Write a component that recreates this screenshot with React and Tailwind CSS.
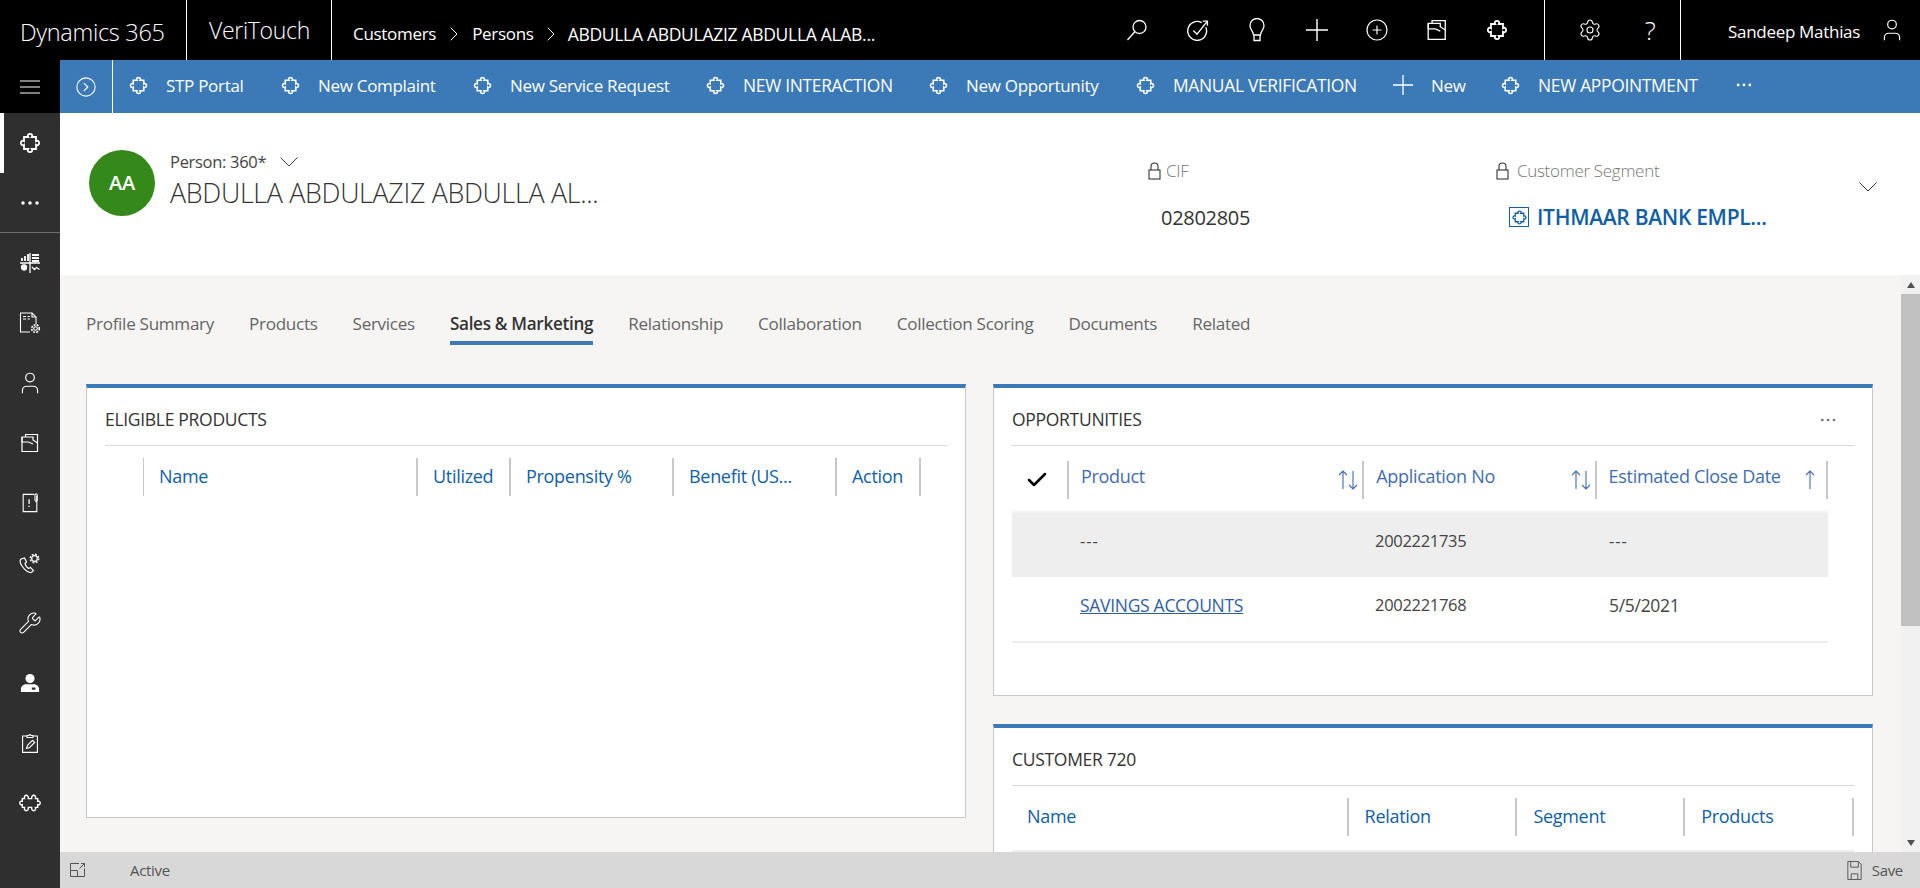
import React from "react";
import {
  ChevronRight,
  CircleChevronRight,
  CirclePlus,
  Check,
  Ellipsis,
  Settings,
  User,
  Wrench,
} from "lucide-react";

const FONT = "font-['Open_Sans','Noto_Sans',sans-serif]";

// the dynamics "entity" glyph, a kind of rounded jigsaw
function Entity({ className }) {
  return (
    <svg viewBox="0 0 20 20" fill="none" stroke="currentColor" strokeWidth="1.5" className={className}>
      <path d="M8.500 5C6.500 1.500 13.500 1.500 11.500 5H15V8.500C18.500 6.500 18.500 13.500 15 11.500V15H11.500C13.500 18.500 6.500 18.500 8.500 15H5V11.500C1.500 13.500 1.500 6.500 5 8.500V5Z" />
    </svg>
  );
}

function Doc({ className }) {
  return (
    <svg viewBox="0 0 20 20" fill="none" stroke="currentColor" strokeWidth="1.2" className={className}>
      <path d="M5.500 3.500V1.500h12v15M2 4h11v3l4.500 3v8.500H2z" />
      <path d="M2 4v5h6.500l4.500 2" />
    </svg>
  );
}

function SalesGrid({ className }) {
  return (
    <svg viewBox="0 0 20 20" fill="none" stroke="currentColor" strokeWidth="1.300" className={className}>
      <path d="M0 10h20M10 0v20" />
      <path d="M2 8V5M5 8V3M8 8V1M12 2h7M12 5h7M12 8h7" strokeWidth="1.800" />
      <circle cx="4" cy="14.500" r="2.500" fill="currentColor" />
      <path d="M12 14l2.500 2.500 2-2 3 2" />
    </svg>
  );
}

function FileGear({ className }) {
  return (
    <svg viewBox="0 0 22 22" fill="none" stroke="currentColor" strokeWidth="1.100" className={className}>
      <path d="M11 20H1.500V1H13l4 4v7" />
      <path d="M13 1v4h4M4 4.500h3M8.500 4.500h2.500M4 7h3M8.500 7h2.500" />
      <circle cx="16.500" cy="16.500" r="1.800" />
      <circle cx="16.500" cy="16.500" r="3.800" strokeDasharray="2 1.100" strokeWidth="1.600" />
    </svg>
  );
}

function NoteAlert({ className }) {
  return (
    <svg viewBox="0 0 18 22" fill="none" stroke="currentColor" strokeWidth="1.200" className={className}>
      <path d="M13.500 1.500H1.500v19h15V3" />
      <path d="M14.500 8V2a1.200 1.200 0 0 1 2.400 0v6l-1.200 1.500z" />
      <path d="M8 7v5M8 14v1.500" strokeWidth="1.400" />
    </svg>
  );
}

function PhoneGear({ className }) {
  return (
    <svg viewBox="0 0 22 22" fill="none" stroke="currentColor" strokeWidth="1.200" className={className}>
      <path d="M2 7c-1.500 1.500-1 4 1 7s5 6 8 6.500c1.500.2 2.500-.5 3.500-2l-3-3-2 1c-1.500-1-3-3-3.500-5l1.500-1.500L5.500 6z" />
      <circle cx="15.500" cy="6.500" r="2.800" />
      <circle cx="15.500" cy="6.500" r="4.200" strokeDasharray="1.800 1.500" strokeWidth="1.500" />
    </svg>
  );
}

function PersonBadge({ className }) {
  return (
    <svg viewBox="0 0 20 22" fill="currentColor" className={className}>
      <circle cx="10" cy="6" r="5" />
      <path d="M0 21v-3c0-3.500 3-5.500 6-5.500h8c3 0 6 2 6 5.500v3zm12-5v2.500h4V16z" fillRule="evenodd" />
    </svg>
  );
}

function ClipPen({ className }) {
  return (
    <svg viewBox="0 0 16 20" fill="none" stroke="currentColor" strokeWidth="1.100" className={className}>
      <path d="M5 3H.6v16.400h14.800V3H11" />
      <path d="M5 4.500V2.500h2a1 1 0 0 1 2 0h2v2z" />
      <path d="M4.500 15.500l1-3.200 5-5 2.200 2.200-5 5z" />
    </svg>
  );
}

function Jigsaw({ className }) {
  return (
    <svg viewBox="0 0 20 18" fill="none" stroke="currentColor" strokeWidth="1.300" className={className}>
      <path d="M3 5H5C4 1 9 1 8.500 5H11.500C11 1 16 1 15 5H17V7.500C20 6.500 20 11.500 17 10.500V13H15C16 17 11 17 11.500 13H8.500C9 17 4 17 5 13H3V10.500C0 11.500 0 6.500 3 7.500Z" />
    </svg>
  );
}

function TargetCheck({ className }) {
  return (
    <svg viewBox="0 0 22 22" fill="none" stroke="currentColor" strokeWidth="1.300" className={className}>
      <path d="M15 3.500A9 9 0 1 0 19 8" />
      <path d="M7 11l3.500 3.500L20.500 2M16 2h4.500v4.500" />
    </svg>
  );
}

function Lens({ className }) {
  return (
    <svg viewBox="0 0 22 22" fill="none" stroke="currentColor" strokeWidth="1.300" className={className}>
      <circle cx="13.500" cy="8" r="6.500" />
      <path d="M9 12.500L1.500 21" />
    </svg>
  );
}

function Bulb({ className }) {
  return (
    <svg viewBox="0 0 20 24" fill="none" stroke="currentColor" strokeWidth="1.300" className={className}>
      <path d="M6.500 17C6.500 13 3 12 3 7.500a7 7 0 0 1 14 0C17 12 13.500 13 13.500 17z" />
      <path d="M7 17v5.500h6V17" />
    </svg>
  );
}

function ThinPlus({ className }) {
  return (
    <svg viewBox="0 0 20 20" fill="none" stroke="currentColor" strokeWidth="1.300" className={className}>
      <path d="M10 0V20M0 10H20" />
    </svg>
  );
}

function Chev({ className }) {
  return (
    <svg viewBox="0 0 18 10" fill="none" stroke="currentColor" strokeWidth="1" className={className}>
      <path d="M.5.500L9 9 17.500.500" />
    </svg>
  );
}

function LockIcon() {
  return (
    <svg viewBox="0 0 13 18" fill="none" stroke="currentColor" strokeWidth="1.100" className="w-[13px] h-[18px] text-[#333333]">
      <rect x="1" y="8" width="11" height="9" />
      <path d="M3 8V4.500a3.500 3.500 0 0 1 7 0V8" />
    </svg>
  );
}

function SortBoth() {
  return (
    <svg viewBox="0 0 20 20" fill="none" stroke="currentColor" strokeWidth="1.100" className="size-[20px]">
      <path d="M5 19V1M1 5l4-4 4 4M15 1v18M11 15l4 4 4-4" />
    </svg>
  );
}

function SortUp() {
  return (
    <svg viewBox="0 0 12 20" fill="none" stroke="currentColor" strokeWidth="1.100" className="w-[12px] h-[20px]">
      <path d="M6 19V1M2 5l4-4 4 4" />
    </svg>
  );
}

function Popout({ className }) {
  return (
    <svg viewBox="0 0 16 16" fill="none" stroke="currentColor" strokeWidth="1" className={className}>
      <path d="M9 1.500H.5v13h14V6.500M.5 8.500h7v6M9.500 6.500l5-5M11 1.500h3.500V5" />
    </svg>
  );
}

function Floppy({ className }) {
  return (
    <svg viewBox="0 0 15 20" fill="none" stroke="currentColor" strokeWidth="1" className={className}>
      <path d="M.5.500h11l3 3v16H.500zM4 19.500v-6h7v6M3.500.500v6h8v-6" />
    </svg>
  );
}

const commands = [
  { label: "STP Portal", w: "w-[152px]" },
  { label: "New Complaint", w: "w-[192px]" },
  { label: "New Service Request", w: "w-[233px]" },
  { label: "NEW INTERACTION", w: "w-[223px]" },
  { label: "New Opportunity", w: "w-[207px]" },
  { label: "MANUAL VERIFICATION", w: "w-[257px]" },
  { label: "New", w: "w-[108px]", plus: true },
  { label: "NEW APPOINTMENT", w: "w-[233px]" },
];

const sideIcons = [
  { Icon: SalesGrid, size: "size-[20px]" },
  { Icon: FileGear, size: "size-[22px]" },
  { Icon: User, size: "size-[26px]" },
  { Icon: Doc, size: "size-[20px]" },
  { Icon: NoteAlert, size: "size-[20px]" },
  { Icon: PhoneGear, size: "size-[22px]" },
  { Icon: Wrench, size: "size-[24px]" },
  { Icon: PersonBadge, size: "size-[20px]" },
  { Icon: ClipPen, size: "size-[20px]" },
  { Icon: Jigsaw, size: "size-[22px]" },
];

const tabs = ["Profile Summary", "Products", "Services", "Sales & Marketing", "Relationship", "Collaboration", "Collection Scoring", "Documents", "Related"];

function Card({ title, className, children, more }) {
  return (
    <div className={`bg-white border-x border-b border-[#c8c8c8] border-t-4 border-t-[#3b79b7] px-[18px] ${className}`}>
      <div className="h-[58px] pt-[6px] flex items-center justify-between border-b border-[#d8d8d8] text-[17.500px] text-[#333333]">
        <span>{title}</span>
        {more && <Ellipsis className="size-5 mr-[16px] text-[#444444]" strokeWidth={1} />}
      </div>
      {children}
    </div>
  );
}

function HeadCell({ label, className, children, color = "text-[#0f5ea8]", lift = "pb-[2px]" }) {
  return (
    <div className={`h-[38px] flex items-center justify-between border-r-2 border-[#c8c8c8] text-[18px] ${color} ${className}`}>
      <span className={lift}>{label}</span>
      {children}
    </div>
  );
}

export default function App() {
  return (
    <div className={`${FONT} h-[888px] w-[1920px] overflow-hidden flex flex-col bg-[#f6f5f4] tracking-[-0.3px]`}>
      {/* top bar */}
      <div className="h-[60px] shrink-0 bg-black text-white flex items-stretch">
        <div className="w-[187px] border-r border-white flex items-center pl-[20px] pt-[5px] text-[23.500px] font-light">Dynamics 365</div>
        <div className="w-[145px] border-r border-white flex items-center pl-[22px] text-[23px] font-light">VeriTouch</div>
        <div className="flex items-center pl-[21px] pt-[8px] text-[17px] w-[775px]">
          <span>Customers</span>
          <ChevronRight className="size-6 mx-[6px]" strokeWidth={1} />
          <span>Persons</span>
          <ChevronRight className="size-6 mx-[5px]" strokeWidth={1} />
          <span className="text-[17.500px]">ABDULLA ABDULAZIZ ABDULLA ALAB...</span>
        </div>
        <div className="flex items-center w-[437px]">
          <div className="w-[60px] flex justify-center"><Lens className="size-[22px]" /></div>
          <div className="w-[60px] flex justify-center"><TargetCheck className="size-[23px]" /></div>
          <div className="w-[60px] flex justify-center"><Bulb className="size-6" /></div>
          <div className="w-[60px] flex justify-center"><ThinPlus className="size-[22px]" /></div>
          <div className="w-[60px] flex justify-center"><CirclePlus className="size-6" strokeWidth={1.200} /></div>
          <div className="w-[60px] flex justify-center"><Doc className="size-[22px]" /></div>
          <div className="w-[60px] flex justify-center"><Entity className="size-[24px]" /></div>
        </div>
        <div className="w-[137px] border-x border-white flex items-center pl-[15px] font-light">
          <div className="w-[60px] flex justify-center"><Settings className="size-6" strokeWidth={1.100} /></div>
          <div className="w-[60px] flex justify-center text-[26px]">?</div>
        </div>
        <div className="flex-1 flex items-center justify-between pl-[47px] pr-[15px] pt-[3px] text-[17px]">
          <span>Sandeep Mathias</span>
          <User className="size-[26px] -mt-[3px]" strokeWidth={1.100} />
        </div>
      </div>

      <div className="flex-1 flex min-h-0">
        {/* sidebar */}
        <div className="w-[60px] shrink-0 bg-[#2f2f2f] text-white flex flex-col items-center">
          <div className="h-[53px] w-full bg-black flex items-center justify-center">
            <svg viewBox="0 0 20 14" fill="none" stroke="currentColor" strokeWidth="1.100" className="w-[20px] h-[14px]">
              <path d="M0 1h20M0 7h20M0 13h20" />
            </svg>
          </div>
          <div className="h-[60px] w-full flex items-center justify-center border-l-4 border-white pr-[4px]"><Entity className="size-[24px]" /></div>
          <div className="h-[60px] w-full flex items-center justify-center border-b border-[#6e6e6e]"><Ellipsis className="size-6" strokeWidth={1.500} /></div>
          {sideIcons.map(({ Icon, size }, i) => (
            <div key={i} className="h-[60px] w-full flex items-center justify-center">
              <Icon className={size} strokeWidth={1.100} />
            </div>
          ))}
        </div>

        <div className="flex-1 min-w-0 flex flex-col">
          {/* command bar */}
          <div className="h-[53px] shrink-0 bg-[#3b79b7] text-white flex items-center text-[17px]">
            <div className="w-[53px] h-full border-r border-white flex items-center justify-center">
              <CircleChevronRight className="size-[22px]" strokeWidth={1.200} />
            </div>
            <div className="flex items-center pl-[16px] pb-[2px]">
              {commands.map((c) => (
                <div key={c.label} className={`${c.w} flex items-center gap-[18px]`}>
                  {c.plus ? <ThinPlus className="size-[20px] shrink-0" /> : <Entity className="size-[21px] shrink-0 -mx-[1px]" />}
                  <span className={c.label === c.label.toUpperCase() ? "whitespace-nowrap text-[17.400px]" : "whitespace-nowrap"}>{c.label}</span>
                </div>
              ))}
              <Ellipsis className="size-5" strokeWidth={1.400} />
            </div>
          </div>

          {/* form header */}
          <div className="h-[162px] shrink-0 bg-white flex">
            <div className="w-[1088px] pl-[29px] pt-[37px] flex gap-[15px]">
              <div className="size-[66px] rounded-full bg-[#35891b] text-white flex items-center justify-center text-[20px] font-semibold">AA</div>
              <div>
                <div className="flex items-center gap-[14px] text-[16.500px] text-[#444444] h-[24px]">
                  Person: 360*
                  <Chev className="w-[18px] h-[10px]" />
                </div>
                <div className="text-[26.800px] leading-[36px] text-[#333333] font-light mt-[1px]">ABDULLA ABDULAZIZ ABDULLA AL...</div>
              </div>
            </div>
            <div className="w-[348px] pt-[45px]">
              <div className="flex items-center gap-[5px] text-[17px] font-light text-[#777777]">
                <LockIcon />CIF
              </div>
              <div className="text-[20px] text-[#333333] ml-[13px] mt-[19px]">02802805</div>
            </div>
            <div className="w-[350px] pt-[45px]">
              <div className="flex items-center gap-[8px] text-[17px] font-light text-[#777777]">
                <LockIcon />Customer Segment
              </div>
              <div className="flex items-center gap-[8px] ml-[13px] mt-[18px] text-[21px] font-semibold text-[#0f5ea8]">
                <span className="size-[20px] border border-[#0f5ea8] flex items-center justify-center"><Entity className="size-[17px]" /></span>
                ITHMAAR BANK EMPL...
              </div>
            </div>
            <div className="pt-[69px] pl-[13px]"><Chev className="w-[18px] h-[10px] text-[#333333]" /></div>
          </div>

          {/* body */}
          <div className="flex-1 min-h-0 flex">
            <div className="flex-1 min-w-0 overflow-hidden pl-[26px] pt-[36px]">
              <div className="flex gap-[35px] h-[30px] text-[17.100px] text-[#666666]">
                {tabs.map((t) =>
                  t === "Sales & Marketing" ? (
                    <div key={t} className="h-[34px] border-b-4 border-[#3b79b7] font-semibold text-[#333333]">{t}</div>
                  ) : (
                    <div key={t}>{t}</div>
                  )
                )}
              </div>
              <div className="flex gap-[27px] mt-[43px]">
                <Card title="ELIGIBLE PRODUCTS" className="w-[880px] h-[434px] shrink-0">
                  <div className="flex mt-[12px] ml-[38px]">
                    <div className="w-[1px] h-[38px] bg-[#c8c8c8] mr-0" />
                    <HeadCell label="Name" className="w-[274px] pl-[15px]" />
                    <HeadCell label="Utilized" className="w-[93px] pl-[15px]" />
                    <HeadCell label="Propensity %" className="w-[163px] pl-[15px]" />
                    <HeadCell label="Benefit (US..." className="w-[163px] pl-[15px]" />
                    <HeadCell label="Action" className="w-[84px] pl-[15px]" />
                  </div>
                </Card>
                <div className="w-[880px] shrink-0 flex flex-col gap-[28px]">
                  <Card title="OPPORTUNITIES" className="h-[312px]" more>
                    <div className="mr-[26px]">
                      <div className="flex items-center mt-[15px]">
                        <div className="w-[57px] h-[38px] border-r-2 border-[#c8c8c8] flex items-center pl-[13px]"><Check className="size-6 text-black" strokeWidth={2.500} /></div>
                        <HeadCell label="Product" lift="pb-[7px]" color="text-[#3f6db0]" className="w-[296px] pl-[12px] pr-[4px]"><SortBoth /></HeadCell>
                        <HeadCell label="Application No" lift="pb-[7px]" color="text-[#3f6db0]" className="w-[233px] pl-[12px] pr-[4px]"><SortBoth /></HeadCell>
                        <HeadCell label="Estimated Close Date" lift="pb-[7px]" color="text-[#3f6db0]" className="w-[232px] pl-[12px] pr-[10px]"><SortUp /></HeadCell>
                      </div>
                      <div className="mt-[12px] h-[66px] pb-[8px] flex items-center bg-[#eeeeee] border-t-2 border-[#f4f4f4] text-[16.500px] text-[#444444]">
                        <div className="w-[68px]" /><div className="w-[295px] tracking-[1px]">---</div><div className="w-[234px]">2002221735</div><div className="tracking-[1px]">---</div>
                      </div>
                      <div className="h-[66px] pb-[8px] flex items-center border-b-2 border-[#eeeeee] text-[16.500px] text-[#444444]">
                        <div className="w-[68px]" /><div className="w-[295px] underline text-[#2f5ea8] text-[17.500px]">SAVINGS ACCOUNTS</div><div className="w-[234px]">2002221768</div><div className="text-[17.500px]">5/5/2021</div>
                      </div>
                    </div>
                  </Card>
                  <Card title="CUSTOMER 720" className="h-[200px]">
                    <div className="flex mt-[12px]">
                      <HeadCell label="Name" className="w-[337px] pl-[15px]" />
                      <HeadCell label="Relation" className="w-[169px] pl-[16px]" />
                      <HeadCell label="Segment" className="w-[168px] pl-[16px]" />
                      <HeadCell label="Products" className="w-[169px] pl-[16px]" />
                    </div>
                    <div className="mt-[14px] h-[2px] bg-[#eeeeee]" />
                  </Card>
                </div>
              </div>
            </div>
            {/* scrollbar */}
            <div className="w-[19px] shrink-0 bg-[#f1f1f1] flex flex-col items-center">
              <div className="h-[19px] shrink-0 flex items-center justify-center">
                <div className="border-x-[4px] border-x-transparent border-b-[6px] border-b-[#505050]" />
              </div>
              <div className="w-full h-[332px] shrink-0 bg-[#c1c1c1]" />
              <div className="flex-1" />
              <div className="h-[19px] shrink-0 flex items-center justify-center">
                <div className="border-x-[4px] border-x-transparent border-t-[6px] border-t-[#505050]" />
              </div>
            </div>
          </div>

          {/* status bar */}
          <div className="h-[36px] shrink-0 bg-[#d8d8d8] flex items-center text-[15px] text-[#555555]">
            <Popout className="size-[16px] ml-[10px]" />
            <span className="ml-[44px]">Active</span>
            <Floppy className="w-[15px] h-[19px] ml-auto" />
            <span className="ml-[10px] mr-[17px]">Save</span>
          </div>
        </div>
      </div>
    </div>
  );
}
